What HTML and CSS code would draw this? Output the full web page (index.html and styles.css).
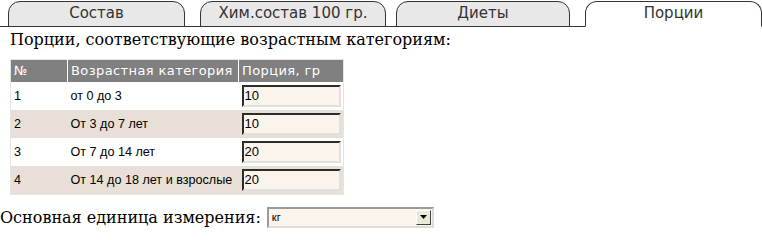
FILE: index.html
```html
<!DOCTYPE html>
<html lang="ru">
<head>
  <meta charset="UTF-8">
  <title>Порции</title>
  <link rel="stylesheet" href="styles.css">
</head>
<body>
  <div class="tabs">
    <a class="tab tab-1" href="#">Состав</a>
    <a class="tab tab-2" href="#">Хим.состав 100 гр.</a>
    <a class="tab tab-3" href="#">Диеты</a>
    <a class="tab tab-4 active" href="#">Порции</a>
  </div>
  <div class="panel">
    <h3>Порции, соответствующие возрастным категориям:</h3>
    <table class="portions">
      <tr>
        <th class="c-num">№</th>
        <th class="c-age">Возрастная категория</th>
        <th class="c-val">Порция, гр</th>
      </tr>
      <tr>
        <td>1</td>
        <td>от 0 до 3</td>
        <td><input type="text" value="10"></td>
      </tr>
      <tr class="alt">
        <td>2</td>
        <td>От 3 до 7 лет</td>
        <td><input type="text" value="10"></td>
      </tr>
      <tr>
        <td>3</td>
        <td>От 7 до 14 лет</td>
        <td><input type="text" value="20"></td>
      </tr>
      <tr class="alt">
        <td>4</td>
        <td>От 14 до 18 лет и взрослые</td>
        <td><input type="text" value="20"></td>
      </tr>
    </table>
  </div>
  <div class="unit">
    <label>Основная единица измерения:</label>
    <div class="select">
      <span class="select-value">кг</span>
      <span class="select-btn"><svg width="7" height="4" viewBox="0 0 7 4"><path d="M0 0h7L3.5 4z" fill="#000"/></svg></span>
    </div>
  </div>
</body>
</html>
```
FILE: styles.css
```css
/* общие */
body {
  margin: 0;
  font-family: 'DejaVu Serif', serif;
  color: #000;
  background: #fff;
}
a { text-decoration: none; }

/* вкладки */
.tabs {
  display: flex;
  height: 25px;
  padding-top: 1px;
  border-bottom: 1px solid #333;
}
.tab {
  box-sizing: border-box;
  height: 26px;
  margin-bottom: -1px;
  background: #e8e8e8;
  border: 1px solid #333;
  border-radius: 12px 12px 0 0;
  color: #333;
  font-family: 'DejaVu Sans', sans-serif;
  font-size: 15px;
  text-align: center;
  line-height: 23px;
}
.tab-1 { width: 177px; margin-left: 8px; }
.tab-2 { width: 186px; margin-left: 15px; }
.tab-3 { width: 174px; margin-left: 10px; }
.tab-4 { width: 177px; margin-left: 15px; }
.tab.active {
  background: #fff;
  border-bottom-color: #fff;
}

/* таблица порций */
.panel { padding: 0 10px; }
.panel h3 {
  margin: 3px 0 10px;
  font-size: 16px;
  font-weight: normal;
}
.portions {
  table-layout: fixed;
  width: 333px;
  border-collapse: collapse;
  border: 1px solid #e4e4e4;
  font-family: 'Liberation Sans', Arial, sans-serif;
  font-size: 12.6px;
}
.portions th {
  box-sizing: border-box;
  height: 22px;
  padding: 0 3px;
  background: #808080;
  color: #fff;
  font-family: 'DejaVu Sans', sans-serif;
  font-size: 13px;
  letter-spacing: 0.4px;
  font-weight: normal;
  text-align: left;
  white-space: nowrap;
  border-left: 1px solid #fff;
}
.portions th:first-child { border-left: 0; }
.c-num { width: 57px; }
.c-age { width: 171px; }
.c-val { width: 105px; }
.portions td {
  height: 28px;
  padding: 0 3px;
  white-space: nowrap;
}
.portions tr.alt td { background: #e8e0d7; }
.portions input {
  box-sizing: border-box;
  width: 99px;
  height: 22px;
  margin: 0;
  padding: 0 1px;
  border: 2px inset #808080;
  border-right-color: #e0e0e0;
  border-bottom-color: #e0e0e0;
  background: #fbf4eb;
  font-family: 'Liberation Sans', Arial, sans-serif;
  font-size: 13px;
}

/* единица измерения */
.unit {
  display: flex;
  align-items: center;
  gap: 6px;
  margin-top: 12px;
  font-size: 16px;
}
.select {
  box-sizing: border-box;
  display: flex;
  align-items: center;
  width: 167px;
  height: 21px;
  border: 2px solid #9a9a9a;
  border-right-color: #dcdcdc;
  border-bottom-color: #dcdcdc;
  background: #fbf4eb;
}
.select-value {
  flex: 1;
  padding-left: 3px;
  font-family: 'Liberation Sans', Arial, sans-serif;
  font-size: 11px;
}
.select-btn {
  box-sizing: border-box;
  display: flex;
  align-items: center;
  justify-content: center;
  width: 15px;
  height: 15px;
  margin-right: 1px;
  background: #ece9d8;
  border: 1px solid;
  border-color: #fff #404040 #404040 #fff;
}
```
